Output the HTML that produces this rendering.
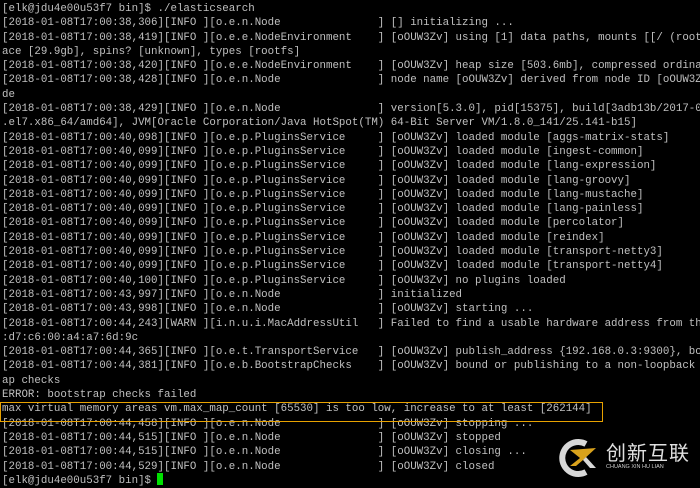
<!DOCTYPE html>
<html><head><meta charset="utf-8"><style>
html,body{margin:0;padding:0;background:#000;width:700px;height:485px;overflow:hidden}
pre{margin:0;position:absolute;left:2px;top:2px;font-family:"Liberation Mono",monospace;font-size:10.8px;line-height:14.3px;color:#c0c0c0;white-space:pre}
.box{position:absolute;left:0;top:402px;width:603px;height:20px;border:1.5px solid #e8a200;box-sizing:border-box}
.cur{position:absolute;left:157px;top:473px;width:6px;height:12px;background:#00e000}
.logo{position:absolute;left:556px;top:438px}
.cn{position:absolute;left:606px;top:440px;font-family:"Noto Sans CJK SC",sans-serif;font-size:20px;color:#e0e0e0;letter-spacing:1px;line-height:24px}
.en{position:absolute;left:606px;top:464px;font-family:"Liberation Sans",sans-serif;font-size:5.5px;color:#ccc}
</style></head><body>
<pre>[elk@jdu4e00u53f7 bin]$ ./elasticsearch
[2018-01-08T17:00:38,306][INFO ][o.e.n.Node               ] [] initializing ...
[2018-01-08T17:00:38,419][INFO ][o.e.e.NodeEnvironment    ] [oOUW3Zv] using [1] data paths, mounts [[/ (rootfs
ace [29.9gb], spins? [unknown], types [rootfs]
[2018-01-08T17:00:38,420][INFO ][o.e.e.NodeEnvironment    ] [oOUW3Zv] heap size [503.6mb], compressed ordinar
[2018-01-08T17:00:38,428][INFO ][o.e.n.Node               ] node name [oOUW3Zv] derived from node ID [oOUW3Zv
de
[2018-01-08T17:00:38,429][INFO ][o.e.n.Node               ] version[5.3.0], pid[15375], build[3adb13b/2017-03
.el7.x86_64/amd64], JVM[Oracle Corporation/Java HotSpot(TM) 64-Bit Server VM/1.8.0_141/25.141-b15]
[2018-01-08T17:00:40,098][INFO ][o.e.p.PluginsService     ] [oOUW3Zv] loaded module [aggs-matrix-stats]
[2018-01-08T17:00:40,099][INFO ][o.e.p.PluginsService     ] [oOUW3Zv] loaded module [ingest-common]
[2018-01-08T17:00:40,099][INFO ][o.e.p.PluginsService     ] [oOUW3Zv] loaded module [lang-expression]
[2018-01-08T17:00:40,099][INFO ][o.e.p.PluginsService     ] [oOUW3Zv] loaded module [lang-groovy]
[2018-01-08T17:00:40,099][INFO ][o.e.p.PluginsService     ] [oOUW3Zv] loaded module [lang-mustache]
[2018-01-08T17:00:40,099][INFO ][o.e.p.PluginsService     ] [oOUW3Zv] loaded module [lang-painless]
[2018-01-08T17:00:40,099][INFO ][o.e.p.PluginsService     ] [oOUW3Zv] loaded module [percolator]
[2018-01-08T17:00:40,099][INFO ][o.e.p.PluginsService     ] [oOUW3Zv] loaded module [reindex]
[2018-01-08T17:00:40,099][INFO ][o.e.p.PluginsService     ] [oOUW3Zv] loaded module [transport-netty3]
[2018-01-08T17:00:40,099][INFO ][o.e.p.PluginsService     ] [oOUW3Zv] loaded module [transport-netty4]
[2018-01-08T17:00:40,100][INFO ][o.e.p.PluginsService     ] [oOUW3Zv] no plugins loaded
[2018-01-08T17:00:43,997][INFO ][o.e.n.Node               ] initialized
[2018-01-08T17:00:43,998][INFO ][o.e.n.Node               ] [oOUW3Zv] starting ...
[2018-01-08T17:00:44,243][WARN ][i.n.u.i.MacAddressUtil   ] Failed to find a usable hardware address from the
:d7:c6:00:a4:a7:6d:9c
[2018-01-08T17:00:44,365][INFO ][o.e.t.TransportService   ] [oOUW3Zv] publish_address {192.168.0.3:9300}, bou
[2018-01-08T17:00:44,381][INFO ][o.e.b.BootstrapChecks    ] [oOUW3Zv] bound or publishing to a non-loopback o
ap checks
ERROR: bootstrap checks failed
max virtual memory areas vm.max_map_count [65530] is too low, increase to at least [262144]
[2018-01-08T17:00:44,458][INFO ][o.e.n.Node               ] [oOUW3Zv] stopping ...
[2018-01-08T17:00:44,515][INFO ][o.e.n.Node               ] [oOUW3Zv] stopped
[2018-01-08T17:00:44,515][INFO ][o.e.n.Node               ] [oOUW3Zv] closing ...
[2018-01-08T17:00:44,529][INFO ][o.e.n.Node               ] [oOUW3Zv] closed
[elk@jdu4e00u53f7 bin]$ </pre>
<div class="box"></div>
<div class="cur"></div>
<svg class="logo" width="46" height="40" viewBox="0 0 46 40">
<path d="M30 6 A16 16 0 1 0 30 34" fill="none" stroke="#d8d8d8" stroke-width="6"/>
<path d="M14 12 L24 20 L14 28 L20 28 L27 22 L40 10 Z" fill="#d9a21c"/>
<path d="M27 22 L34 30 L40 30 L30 19 Z" fill="#d8d8d8"/>
</svg>
<div class="cn">创新互联</div>
<div class="en">CHUANG XIN HU LIAN</div>
</body></html>
